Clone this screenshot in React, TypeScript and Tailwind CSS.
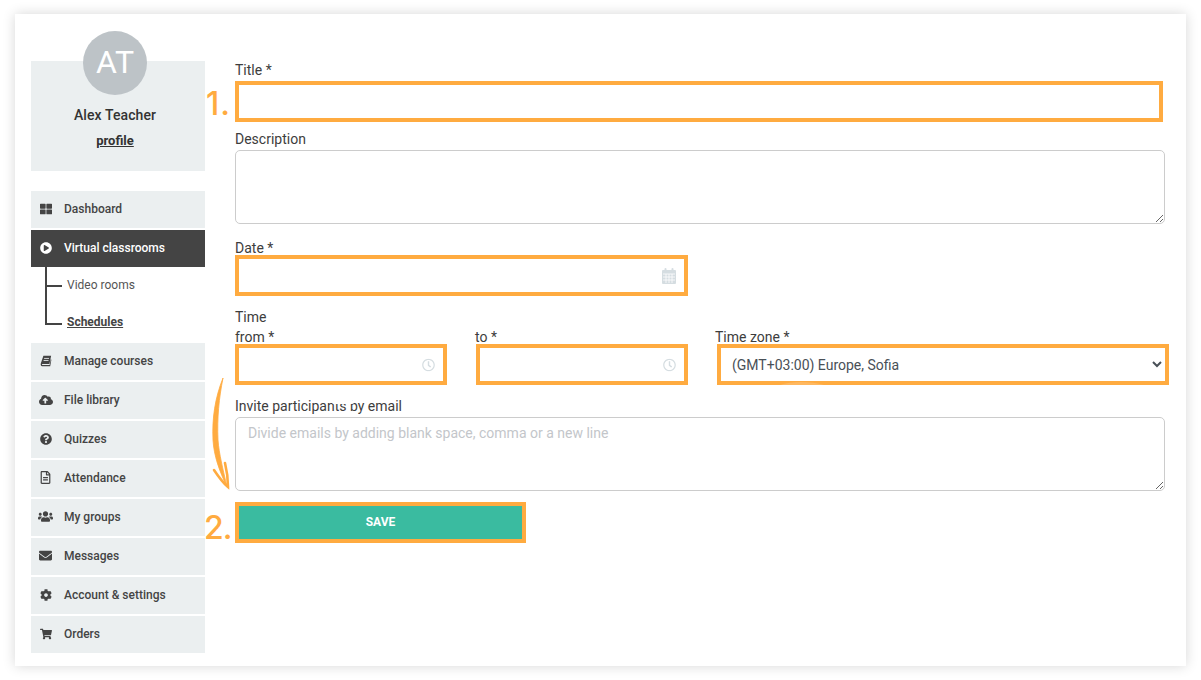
import React from 'react';
import {
  FaThLarge,
  FaPlayCircle,
  FaCloudUploadAlt,
  FaQuestionCircle,
  FaRegFileAlt,
  FaUsers,
  FaEnvelope,
  FaCog,
  FaShoppingCart,
  FaRegClock,
} from 'react-icons/fa';

type IconProps = { className?: string };

// slanted book, the icon package only has an upright one
const BookIcon = ({ className }: IconProps) => (
  <svg className={className} viewBox="0 0 14 14" fill="none">
    <path d="M4 1 H13 L11 10.5 H3 C2.2 10.5 2 11.8 2.9 11.8 H11.2 L12.6 5 L13.3 5.6 L11.9 13 H2.6 C0.9 13 0.5 11.2 1 9.6 Z" fill="currentColor" />
    <path d="M4.8 4 H10.5 M4.2 6.4 H9.9" stroke="#ebeff0" strokeWidth="1" />
  </svg>
);

const CalendarIcon = ({ className }: IconProps) => (
  <svg className={className} viewBox="0 0 14 16" fill="none">
    <rect x="0" y="2" width="14" height="14" rx="1" fill="currentColor" />
    <rect x="2.5" y="0" width="2" height="4" rx="1" fill="currentColor" />
    <rect x="9.5" y="0" width="2" height="4" rx="1" fill="currentColor" />
    <path d="M1 6 H13 M1 9 H13 M1 12 H13 M4 6 V15 M7 6 V15 M10 6 V15" stroke="white" strokeWidth="0.8" />
  </svg>
);

const topItems = [{ label: 'Dashboard', icon: FaThLarge, size: 'text-xs' }];

const bottomItems = [
  { label: 'Manage courses', icon: BookIcon, size: 'h-3 w-3' },
  { label: 'File library', icon: FaCloudUploadAlt, size: 'text-sm' },
  { label: 'Quizzes', icon: FaQuestionCircle, size: 'text-xs' },
  { label: 'Attendance', icon: FaRegFileAlt, size: 'text-[13px]' },
  { label: 'My groups', icon: FaUsers, size: 'text-[15px]' },
  { label: 'Messages', icon: FaEnvelope, size: 'text-[13px]' },
  { label: 'Account & settings', icon: FaCog, size: 'text-xs' },
  { label: 'Orders', icon: FaShoppingCart, size: 'text-xs' },
];

const NavItem = ({ label, icon: Icon, size, active }: { label: string; icon: React.ComponentType<IconProps>; size: string; active?: boolean }) => (
  <a
    href="#"
    className={`flex h-[37px] items-center pb-[2px] text-xs font-medium ${active ? 'bg-[#444444] font-bold text-white' : 'bg-[#ebeff0] text-[#444444]'}`}
  >
    <span className="mr-1 flex w-[29px] shrink-0 justify-center">
      <Icon className={size} />
    </span>
    {label}
  </a>
);

const Sidebar = () => (
  <aside className="w-[174px] shrink-0 pt-[17px]">
    <div className="relative z-10 ml-[52px] flex h-16 w-16 items-center justify-center rounded-full bg-[#bdc3c7] text-[32px] text-white">
      AT
    </div>
    <div className="-mt-[34px] flex h-[110px] flex-col items-center bg-[#ebeff0] pt-[44px] pr-[6px] text-[#333333]">
      <p className="text-sm leading-5 font-medium tracking-[0.1px]">Alex Teacher</p>
      <a href="#" className="mt-[6px] text-[13px] leading-5 font-bold underline">
        profile
      </a>
    </div>

    <nav className="mt-5 flex flex-col">
      {topItems.map((item) => (
        <NavItem key={item.label} {...item} />
      ))}
      <div className="mt-[2px]">
        <NavItem label="Virtual classrooms" icon={FaPlayCircle} size="text-xs" active />
      </div>
      <div className="h-[38px] pl-[14px]">
        <div className="flex h-full items-start text-xs text-[#555555]">
          <div className="h-full w-[17px] border-l-2 border-[#444444]">
            <div className="mt-[18px] h-[2px] w-[15px] bg-[#444444]" />
          </div>
          <a href="#" className="ml-[5px] leading-[36px]">
            Video rooms
          </a>
        </div>
      </div>
      <div className="h-[38px] pl-[14px]">
        <div className="flex items-start text-xs font-bold text-[#444444]">
          <div className="h-5 w-[17px] border-b-2 border-l-2 border-[#444444]" />
          <a href="#" className="ml-[5px] leading-[34px] underline">
            Schedules
          </a>
        </div>
      </div>
      <div className="flex flex-col gap-[2px]">
        {bottomItems.map((item) => (
          <NavItem key={item.label} {...item} />
        ))}
      </div>
    </nav>
  </aside>
);

const boxClass = 'block w-full border-4 border-[#ffab40] bg-white outline-none';
const areaClass = 'mt-px block h-[74px] w-[930px] rounded-[5px] border border-[#cccccc] px-3 py-[5px] text-sm outline-none placeholder:text-[#c3c6ca]';

const IconInput = ({ children }: { children: React.ReactNode }) => (
  <div className="relative">
    <input className={`${boxClass} h-[41px]`} />
    <span className="absolute top-1/2 right-[12px] -translate-y-1/2 text-[#d5dde1]">{children}</span>
  </div>
);

export default function App() {
  return (
    <div className="h-[680px] overflow-hidden bg-white px-[15px] pt-[14px] font-['Roboto',sans-serif] text-sm text-[#3d3d3d]">
      <div className="relative flex h-[652px] w-[1171px] bg-white pl-4 shadow-[0_0_12px_rgba(0,0,0,0.16)]">
        <Sidebar />

        <main className="ml-[30px] w-[930px] pt-[46px]">
          <label className="block leading-5">Title *</label>
          <input className={`${boxClass} mt-px h-[41px] !w-[928px]`} />

          <label className="mt-[7px] block leading-5">Description</label>
          <textarea className={areaClass} />

          <label className="mt-[14px] block leading-5">Date *</label>
          <div className="-mt-[3px] w-[453px]">
            <IconInput>
              <CalendarIcon className="h-4 w-[14px]" />
            </IconInput>
          </div>

          <label className="mt-[11px] block leading-5">Time</label>
          <div className="flex">
            <div className="w-[212px] shrink-0">
              <label className="block leading-5">from *</label>
              <div className="-mt-[3px]">
                <IconInput>
                  <FaRegClock className="text-[13px]" />
                </IconInput>
              </div>
            </div>
            <div className="ml-[29px] w-[212px] shrink-0">
              <label className="-ml-px block leading-5">to *</label>
              <div className="-mt-[3px]">
                <IconInput>
                  <FaRegClock className="text-[13px]" />
                </IconInput>
              </div>
            </div>
            <div className="ml-[29px] w-[452px] shrink-0">
              <label className="-ml-[2px] block leading-5">Time zone *</label>
              <select className={`${boxClass} -mt-[3px] h-[41px] pl-[7px] text-sm text-[#495057]`} defaultValue="sofia">
                <option value="sofia">(GMT+03:00) Europe, Sofia</option>
              </select>
            </div>
          </div>

          <label className="mt-[11px] block leading-5">Invite participants by email</label>
          <textarea className={areaClass} placeholder="Divide emails by adding blank space, comma or a new line" />

          <button className="mt-[11px] block h-[41px] w-[291px] border-4 border-[#ffab40] bg-[#3abba0] pb-[2px] text-xs font-bold text-white">
            SAVE
          </button>
        </main>

        {/* annotations drawn over the form */}
        <span className="absolute top-[70px] left-[191px] font-['Inter',sans-serif] text-[32px] leading-10 font-medium tracking-[1px] text-[#ffab40]">1.</span>
        <span className="absolute top-[494px] left-[189px] font-['Inter',sans-serif] text-[32px] leading-10 font-medium tracking-[-1px] text-[#ffab40]">2.</span>

        <svg className="absolute top-[364px] left-[195px]" width="24" height="112" viewBox="0 0 24 112" fill="none">
          <path d="M13 0 C5 20 2 40 3 62 C4 78 9 92 17 109 C13 91 9 76 8 62 C7 40 9 20 13 0 Z" fill="#ffab40" stroke="#ffab40" strokeWidth="0.8" />
          <path d="M4 92 C8 98 12 104 18 109 C18 101 17 93 15 85" stroke="#ffab40" strokeWidth="2.6" strokeLinecap="round" />
        </svg>

        {/* leftovers of the erased scribble */}
        <svg className="absolute top-[366px] left-[764px]" width="46" height="5" viewBox="0 0 46 5" fill="none">
          <path d="M1 5 C12 1 32 1 45 5 Z" fill="#ffb860" />
        </svg>
        <span className="absolute top-[386px] left-[317px] h-[4px] w-[22px] rounded-full bg-white" />
      </div>
    </div>
  );
}
